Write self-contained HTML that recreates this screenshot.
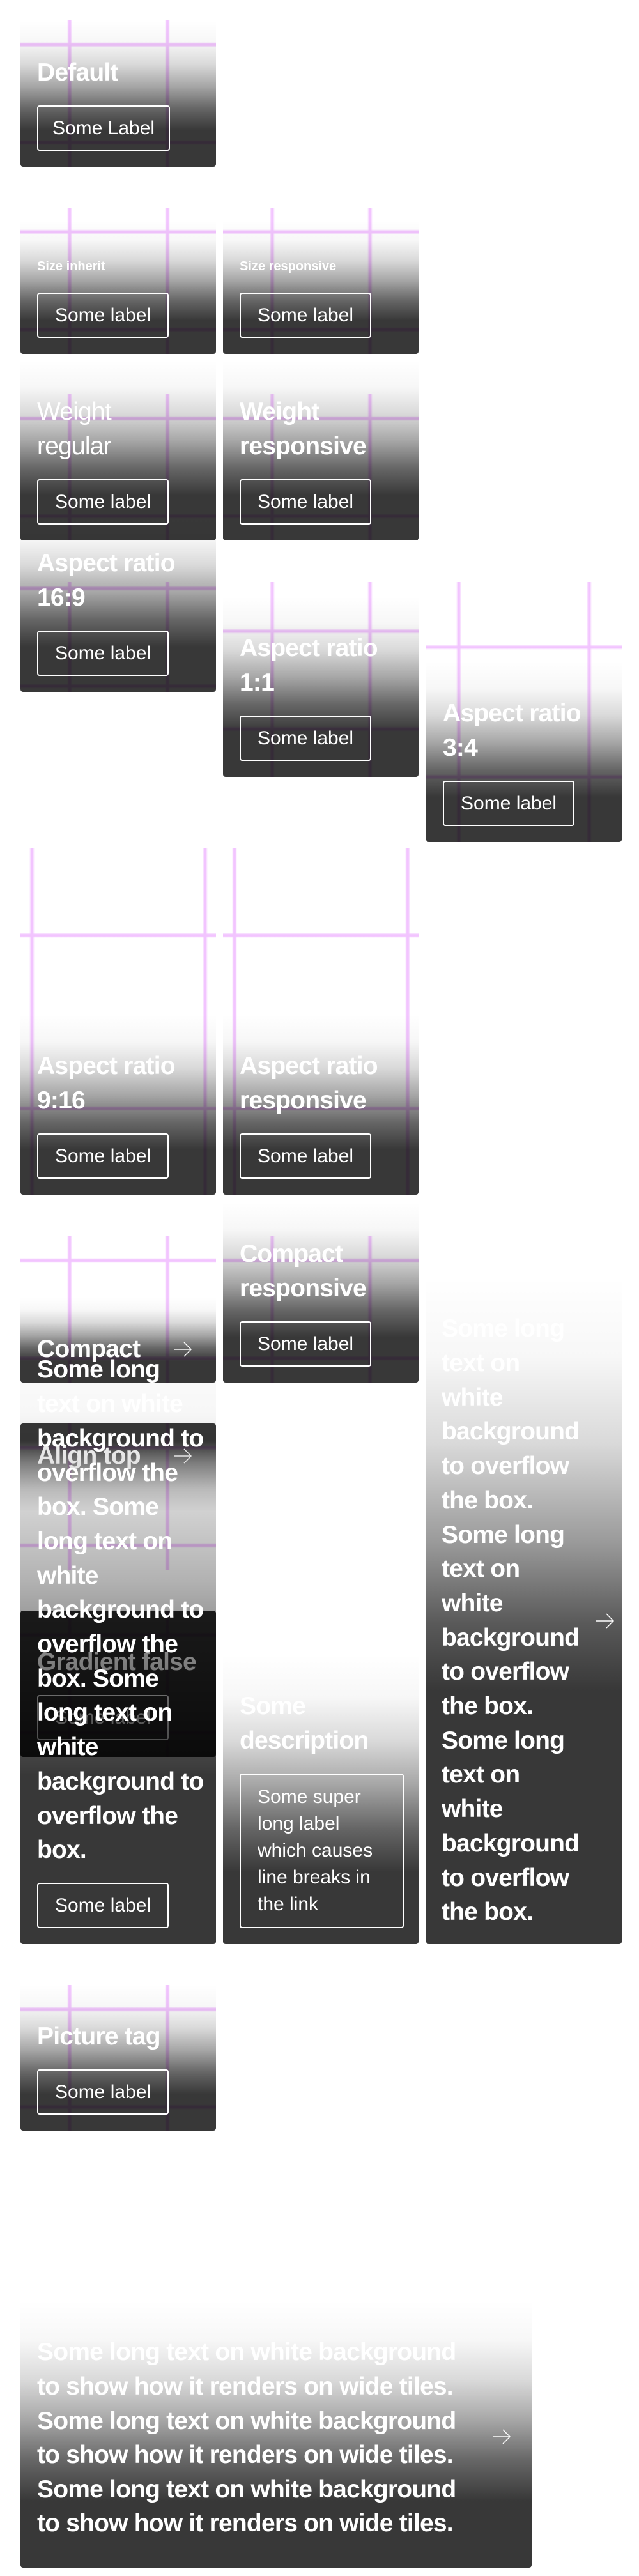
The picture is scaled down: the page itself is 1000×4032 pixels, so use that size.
<!DOCTYPE html>
<html><head><meta charset="utf-8">
<style>
*{box-sizing:border-box;margin:0;padding:0}
html,body{width:1000px;height:4032px;background:#fff;overflow:hidden}
body{position:relative;font-family:"Liberation Sans",sans-serif;color:#fff}
.tile{position:absolute;background:#fff;border-radius:4px}
.img{position:absolute;left:0;top:0;right:0;bottom:0;overflow:hidden;border-radius:4px}
.sq{position:absolute}
.v{position:absolute;top:0;bottom:0;width:8px;margin-left:-4px;background:linear-gradient(to right,rgba(240,190,255,0),#f2c4ff 35%,#f2c4ff 65%,rgba(240,190,255,0))}
.h{position:absolute;left:0;right:0;height:8px;margin-top:-4px;background:linear-gradient(to bottom,rgba(240,190,255,0),#f2c4ff 35%,#f2c4ff 65%,rgba(240,190,255,0))}
.ct{position:absolute;left:0;right:0;bottom:0;padding:55px 26px 25px;border-radius:0 0 4px 4px;
background:linear-gradient(to bottom,rgba(0,0,0,0) 0%,rgba(0,0,0,.03) 15%,rgba(0,0,0,.15) 30%,rgba(0,0,0,.35) 45%,rgba(0,0,0,.6) 60%,rgba(0,0,0,.78) 75%,rgba(0,0,0,.78) 100%)}
.t{font-weight:700;font-size:39px;line-height:54px;letter-spacing:-0.8px;white-space:nowrap;margin-bottom:24px}
.t.r{font-weight:400}
.t.s{font-size:20px;line-height:34px;letter-spacing:0}
.b{display:inline-block;height:71px;border:2px solid #fff;border-radius:4px;padding:0 26px;font-size:30px;line-height:67px;white-space:nowrap}
.arrow{position:absolute;width:28px;height:24px}
</style></head><body>

<div class="tile" style="left:32px;top:32px;width:306px;height:229px">
<div class="img"><div class="sq" style="left:0;top:-38.5px;width:306px;height:306px"><div class="v" style="left:25%"></div><div class="v" style="left:75%"></div><div class="h" style="top:25%"></div><div class="h" style="top:75%"></div></div></div>
<div class="ct"><div class="t">Default</div><div class="b" style="width:208px;text-align:center;padding:0">Some Label</div></div></div>

<div class="tile" style="left:32px;top:325px;width:306px;height:229px">
<div class="img"><div class="sq" style="left:0;top:-38.5px;width:306px;height:306px"><div class="v" style="left:25%"></div><div class="v" style="left:75%"></div><div class="h" style="top:25%"></div><div class="h" style="top:75%"></div></div></div>
<div class="ct"><div class="t s">Size inherit</div><div class="b">Some label</div></div></div>

<div class="tile" style="left:349px;top:325px;width:306px;height:229px">
<div class="img"><div class="sq" style="left:0;top:-38.5px;width:306px;height:306px"><div class="v" style="left:25%"></div><div class="v" style="left:75%"></div><div class="h" style="top:25%"></div><div class="h" style="top:75%"></div></div></div>
<div class="ct"><div class="t s">Size responsive</div><div class="b">Some label</div></div></div>

<div class="tile" style="left:32px;top:617px;width:306px;height:229px">
<div class="img"><div class="sq" style="left:0;top:-38.5px;width:306px;height:306px"><div class="v" style="left:25%"></div><div class="v" style="left:75%"></div><div class="h" style="top:25%"></div><div class="h" style="top:75%"></div></div></div>
<div class="ct"><div class="t r">Weight<br>regular</div><div class="b">Some label</div></div></div>

<div class="tile" style="left:349px;top:617px;width:306px;height:229px">
<div class="img"><div class="sq" style="left:0;top:-38.5px;width:306px;height:306px"><div class="v" style="left:25%"></div><div class="v" style="left:75%"></div><div class="h" style="top:25%"></div><div class="h" style="top:75%"></div></div></div>
<div class="ct"><div class="t">Weight<br>responsive</div><div class="b">Some label</div></div></div>

<div class="tile" style="left:32px;top:911px;width:306px;height:172px">
<div class="img"><div class="sq" style="left:0;top:-67px;width:306px;height:306px"><div class="v" style="left:25%"></div><div class="v" style="left:75%"></div><div class="h" style="top:25%"></div><div class="h" style="top:75%"></div></div></div>
<div class="ct"><div class="t">Aspect ratio<br>16:9</div><div class="b">Some label</div></div></div>

<div class="tile" style="left:349px;top:911px;width:306px;height:305px">
<div class="img"><div class="sq" style="left:0;top:0;width:306px;height:306px"><div class="v" style="left:25%"></div><div class="v" style="left:75%"></div><div class="h" style="top:25%"></div><div class="h" style="top:75%"></div></div></div>
<div class="ct"><div class="t">Aspect ratio<br>1:1</div><div class="b">Some label</div></div></div>

<div class="tile" style="left:667px;top:911px;width:306px;height:407px">
<div class="img"><div class="sq" style="left:-50.5px;top:0;width:407px;height:407px"><div class="v" style="left:25%"></div><div class="v" style="left:75%"></div><div class="h" style="top:25%"></div><div class="h" style="top:75%"></div></div></div>
<div class="ct"><div class="t">Aspect ratio<br>3:4</div><div class="b">Some label</div></div></div>

<div class="tile" style="left:32px;top:1328px;width:306px;height:542px">
<div class="img"><div class="sq" style="left:-118px;top:0;width:542px;height:542px"><div class="v" style="left:25%"></div><div class="v" style="left:75%"></div><div class="h" style="top:25%"></div><div class="h" style="top:75%"></div></div></div>
<div class="ct"><div class="t">Aspect ratio<br>9:16</div><div class="b">Some label</div></div></div>

<div class="tile" style="left:349px;top:1328px;width:306px;height:542px">
<div class="img"><div class="sq" style="left:-118px;top:0;width:542px;height:542px"><div class="v" style="left:25%"></div><div class="v" style="left:75%"></div><div class="h" style="top:25%"></div><div class="h" style="top:75%"></div></div></div>
<div class="ct"><div class="t">Aspect ratio<br>responsive</div><div class="b">Some label</div></div></div>

<div class="tile" style="left:32px;top:1935px;width:306px;height:229px">
<div class="img"><div class="sq" style="left:0;top:-38.5px;width:306px;height:306px"><div class="v" style="left:25%"></div><div class="v" style="left:75%"></div><div class="h" style="top:25%"></div><div class="h" style="top:75%"></div></div></div>
<div class="ct"><div class="t" style="margin:0">Compact</div></div>
<svg class="arrow" style="left:240px;top:165px" viewBox="0 0 28 24"><path d="M0 12H27M16 1L27 12L16 23" fill="none" stroke="#fff" stroke-width="1.5"/></svg></div>

<div class="tile" style="left:349px;top:1935px;width:306px;height:229px">
<div class="img"><div class="sq" style="left:0;top:-38.5px;width:306px;height:306px"><div class="v" style="left:25%"></div><div class="v" style="left:75%"></div><div class="h" style="top:25%"></div><div class="h" style="top:75%"></div></div></div>
<div class="ct"><div class="t">Compact<br>responsive</div><div class="b">Some label</div></div></div>

<div class="tile" style="left:667px;top:2814px;width:306px;height:229px">
<div class="ct" style="padding:55px 26px 23px 24px;background:linear-gradient(to bottom,rgba(0,0,0,0) 0%,rgba(0,0,0,.03) 12%,rgba(0,0,0,.15) 25%,rgba(0,0,0,.4) 40%,rgba(0,0,0,.65) 52%,rgba(0,0,0,.78) 62%,rgba(0,0,0,.78) 100%)"><div class="t" style="margin:0;line-height:53.7px">Some long<br>text on<br>white<br>background<br>to overflow<br>the box.<br>Some long<br>text on<br>white<br>background<br>to overflow<br>the box.<br>Some long<br>text on<br>white<br>background<br>to overflow<br>the box.</div></div>
<svg class="arrow" style="left:266px;top:-289px" viewBox="0 0 28 24"><path d="M0 12H27M16 1L27 12L16 23" fill="none" stroke="#fff" stroke-width="1.5"/></svg></div>

<div class="tile" style="left:32px;top:2228px;width:306px;height:229px">
<div class="img"><div class="sq" style="left:0;top:-38.5px;width:306px;height:306px"><div class="v" style="left:25%"></div><div class="v" style="left:75%"></div><div class="h" style="top:25%"></div><div class="h" style="top:75%"></div></div></div>
<div class="ct" style="top:0;bottom:auto;padding:24px 26px 60px;border-radius:4px 4px 0 0;background:linear-gradient(to bottom,rgba(0,0,0,.78) 0%,rgba(0,0,0,.78) 20%,rgba(0,0,0,.45) 45%,rgba(0,0,0,.15) 75%,rgba(0,0,0,0) 100%)"><div class="t" style="margin:0">Align top</div></div>
<svg class="arrow" style="left:240px;top:39px" viewBox="0 0 28 24"><path d="M0 12H27M16 1L27 12L16 23" fill="none" stroke="#fff" stroke-width="1.5"/></svg></div>

<div class="tile" style="left:32px;top:2521px;width:306px;height:229px">
<div class="img"><div class="sq" style="left:0;top:-38.5px;width:306px;height:306px"><div class="v" style="left:25%"></div><div class="v" style="left:75%"></div><div class="h" style="top:25%"></div><div class="h" style="top:75%"></div></div><div style="position:absolute;inset:0;background:rgba(0,0,0,.84)"></div></div>
<div class="ct" style="background:none;padding-bottom:26px"><div class="t">Gradient false</div><div class="b">Some label</div></div></div>

<div class="tile" style="left:349px;top:2814px;width:306px;height:229px">
<div class="ct"><div class="t">Some<br>description</div><div class="b" style="height:auto;width:257px;white-space:normal;line-height:42px;padding:14px 26px">Some super<br>long label<br>which causes<br>line breaks in<br>the link</div></div></div>

<div class="tile" style="left:32px;top:2814px;width:306px;height:229px">
<div class="ct" style="background:linear-gradient(to bottom,rgba(0,0,0,0) 0%,rgba(0,0,0,.03) 15%,rgba(0,0,0,.15) 28%,rgba(0,0,0,.3) 42%,rgba(0,0,0,.5) 55%,rgba(0,0,0,.78) 73%,rgba(0,0,0,.78) 100%)"><div class="t" style="line-height:53.7px">Some long<br>text on white<br>background to<br>overflow the<br>box. Some<br>long text on<br>white<br>background to<br>overflow the<br>box. Some<br>long text on<br>white<br>background to<br>overflow the<br>box.</div><div class="b">Some label</div></div></div>

<div class="tile" style="left:32px;top:3107px;width:306px;height:228px">
<div class="img"><div class="sq" style="left:0;top:-39px;width:306px;height:306px"><div class="v" style="left:25%"></div><div class="v" style="left:75%"></div><div class="h" style="top:25%"></div><div class="h" style="top:75%"></div></div></div>
<div class="ct"><div class="t">Picture tag</div><div class="b">Some label</div></div></div>

<div class="tile" style="left:32px;top:3400px;width:800px;height:619px">
<div class="ct" style="padding:55px 26px 42px"><div class="t" style="margin:0;line-height:53.6px">Some long text on white background<br>to show how it renders on wide tiles.<br>Some long text on white background<br>to show how it renders on wide tiles.<br>Some long text on white background<br>to show how it renders on wide tiles.</div></div>
<svg class="arrow" style="left:739px;top:402px" viewBox="0 0 28 24"><path d="M0 12H27M16 1L27 12L16 23" fill="none" stroke="#fff" stroke-width="1.5"/></svg></div>

</body></html>
